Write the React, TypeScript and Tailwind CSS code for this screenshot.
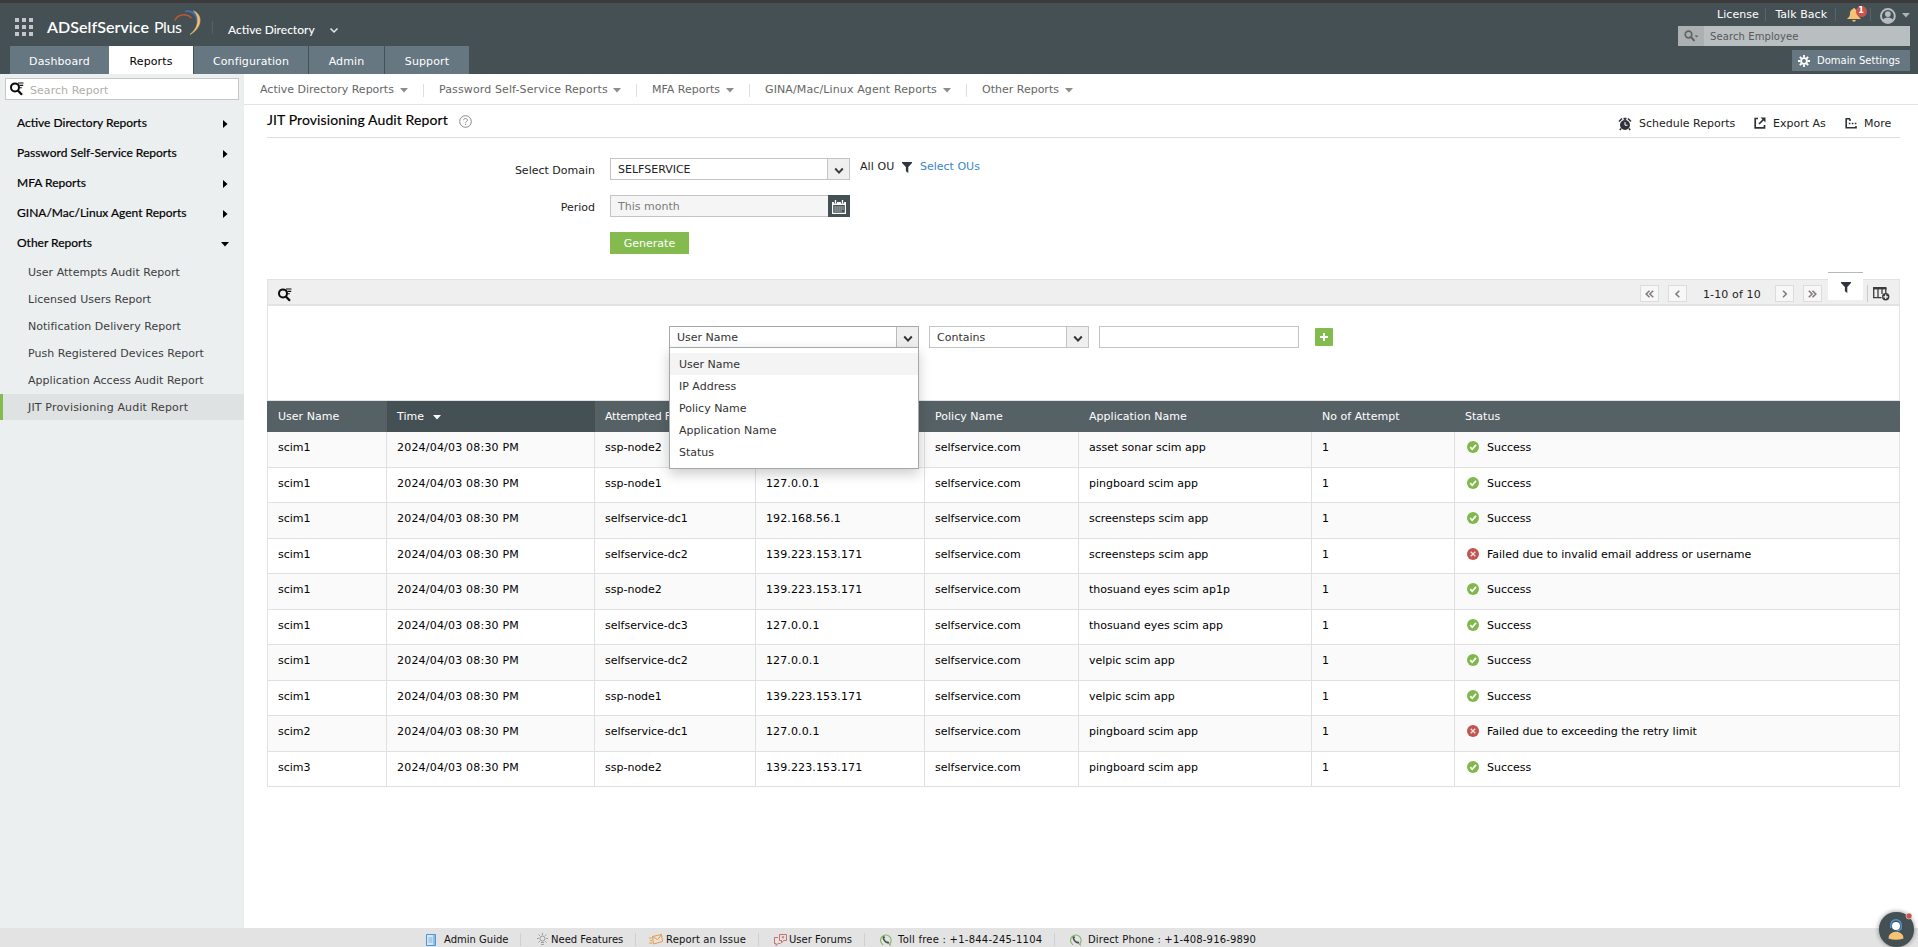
import React from "react";

const verdana = "font-['DejaVu_Sans',sans-serif] text-[11px]";

function Caret({ className = "" }: { className?: string }) {
  return (
    <svg width="8" height="5" viewBox="0 0 8 5" className={className}>
      <path d="M0 0h8L4 4.5z" fill="currentColor" />
    </svg>
  );
}

function SearchListIcon() {
  return (
    <svg width="14" height="14" viewBox="0 0 14 14" fill="none" stroke="#0b0b0b">
      <circle cx="5" cy="5.400" r="4" strokeWidth="2" />
      <path d="M7.600 8.300L12 12.800" strokeWidth="2.300" />
      <path d="M8 1h5.500M9.500 3.400h3.700M9.500 5.700h2.300" strokeWidth="1.100" />
    </svg>
  );
}

function Chevron({ className = "" }: { className?: string }) {
  return (
    <svg width="10" height="8" viewBox="0 0 10 8" className={className}>
      <path d="M1.200 1.500L5 5.600 8.800 1.500" fill="none" stroke="currentColor" strokeWidth="2" />
    </svg>
  );
}

function Funnel() {
  return (
    <svg width="10" height="11" viewBox="0 0 10 11">
      <path d="M0 0h10v1L6.300 5v6L3.900 9.200V5L0 1z" fill="#2f3440" />
    </svg>
  );
}

function StatusIcon({ ok }: { ok: boolean }) {
  return (
    <svg width="12" height="12" viewBox="0 0 12 12" className="mb-[3px]">
      <circle cx="6" cy="6" r="6" fill={ok ? "#80b84c" : "#c0564f"} />
      {ok ? (
        <path d="M3.200 6.200l2 2L9 3.900" fill="none" stroke="#fff" strokeWidth="1.700" />
      ) : (
        <path d="M3.700 3.700l4.600 4.600M8.300 3.700L3.700 8.300" fill="none" stroke="#f7e4e2" strokeWidth="1.300" />
      )}
    </svg>
  );
}

function PhoneIcon() {
  return (
    <svg width="12" height="12" viewBox="0 0 12 12" fill="none">
      <path d="M3 10.800A5.300 5.300 0 1 1 9.500 10.200L11 11.600" stroke="#7db356" strokeWidth="1.100" />
      <path d="M3.500 2.800c-.8 2.600 2.200 6.200 5 6" stroke="#454e53" strokeWidth="1.500" />
      <path d="M3.200 3.700l1.400-.9M7.500 9.200l1.100-1.300" stroke="#454e53" strokeWidth="1.900" />
    </svg>
  );
}

const tabs = [
  { label: "Dashboard", cls: "w-[99px] bg-[#667782] text-white" },
  { label: "Reports", cls: "w-[84px] bg-white text-black mr-px" },
  { label: "Configuration", cls: "w-[114px] bg-[#667782] text-white mr-px" },
  { label: "Admin", cls: "w-[75px] bg-[#667782] text-white mr-px" },
  { label: "Support", cls: "w-[84px] bg-[#667782] text-white" },
];

function Header() {
  return (
    <header className="flex h-[74px] shrink-0 justify-between border-t-[3px] border-[#3d3a3b] bg-[#455055]">
      <div className="flex flex-col">
        <div className="flex h-[43px] pl-[15px]">
          <svg width="18" height="18" viewBox="0 0 18 18" className="mt-[15px]" fill="#c3c7c9">
            {[0, 7, 14].map((y) => [0, 7, 14].map((x) => <rect key={`${x}-${y}`} x={x} y={y} width="4" height="4" />))}
          </svg>
          <div className="relative ml-[14px] mt-[12px] flex h-6 w-[165px] items-center whitespace-nowrap font-['Lato',sans-serif] text-[16px] text-white">
            <span className="font-semibold tracking-[0.05px]">ADSelfService</span>
            <span className="ml-[5px] tracking-[-0.4px]">Plus</span>
            <svg width="30" height="28" viewBox="0 0 30 28" className="absolute left-[127px] top-[-6px]" fill="none">
              <path d="M1 11.500C3 5.500 12 3.500 17.500 9" stroke="#c0562a" strokeWidth="1.500" />
              <path d="M11 2.500C19 .5 24 7 23.500 16" stroke="#3f6fb5" strokeWidth="1.800" />
              <path d="M19.500 2C28 5 29.500 18 16 25.500C24.500 19 26.500 8 19.500 2z" fill="#f6c06c" stroke="#f6c06c" strokeWidth=".6" />
            </svg>
          </div>
          <div className="mt-[18px] h-[13px] w-px bg-[#566067]" />
          <div className="ml-[15px] mt-[17px] flex h-5 items-center whitespace-nowrap font-['Lato',sans-serif] text-[12px] font-medium text-white">
            <span className="w-[101px]">Active Directory</span>
            <svg width="10" height="7" viewBox="0 0 10 7">
              <path d="M1.500 1.500L5 5l3.500-3.500" fill="none" stroke="#e6e8e9" strokeWidth="1.500" />
            </svg>
          </div>
        </div>
        <nav className="flex h-[28px] pl-[10px]">
          {tabs.map((t) => (
            <div key={t.label} className={`flex items-center justify-center pt-[4px] tracking-[0.12px] ${verdana} ${t.cls}`}>
              {t.label}
            </div>
          ))}
        </nav>
      </div>
      <div className="flex w-[240px] flex-col items-end pr-2">
        <div className={`flex h-[23px] w-[193px] items-center whitespace-nowrap text-white tracking-[0.05px] ${verdana}`}>
          <span className="w-[49px] pt-px">License</span>
          <span className="h-[13px] w-px bg-[#5a646a]" />
          <span className="ml-[9px] w-[60px] pt-px">Talk Back</span>
          <span className="h-[13px] w-px bg-[#5a646a]" />
          <span className="relative ml-[11px] flex w-[24px]">
            <svg width="14" height="14" viewBox="0 0 14 14">
              <path d="M7 0a1 1 0 0 1 1 1c2.200.6 3 2.300 3 4.500 0 2.500.8 3.700 2.700 5v.6H.3v-.6C2.200 9.200 3 8 3 5.500 3 3.300 3.800 1.600 6 1a1 1 0 0 1 1-1zM5.200 12h3.600a1.800 1.800 0 0 1-3.600 0z" fill="#f7c274" />
            </svg>
            <span className="absolute left-[9px] top-[-2px] flex h-[11px] w-[11px] items-center justify-center rounded-full bg-[#c9544d] text-[8px] font-bold tracking-normal">1</span>
          </span>
          <span className="h-[13px] w-px bg-[#5a646a]" />
          <svg width="16" height="16" viewBox="0 0 16 16" className="ml-[9px] mt-[2px]">
            <circle cx="8" cy="8" r="7" fill="none" stroke="#b8bcbe" strokeWidth="2" />
            <circle cx="8" cy="6" r="2.900" fill="#b8bcbe" />
            <path d="M2.400 12.400c1.600-3.900 9.600-3.900 11.200 0-2.500 3.300-8.700 3.300-11.200 0z" fill="#b8bcbe" />
          </svg>
          <Caret className="ml-[6px] mt-[2px] text-[#aeb3b5]" />
        </div>
        <div className="flex h-5 w-[232px] items-center bg-[#b9bec0] font-['DejaVu_Sans',sans-serif] text-[10px] text-[#56595b]">
          <span className="flex h-5 w-[26px] items-center bg-[#acb0b1] pl-[6px]">
            <svg width="16" height="12" viewBox="0 0 16 12" fill="none" stroke="#5f6466">
              <circle cx="4.500" cy="4.500" r="3.300" strokeWidth="1.700" />
              <path d="M7 7l3.500 4" strokeWidth="1.900" />
              <path d="M10.500 5.500h4l-2 2z" fill="#5f6466" stroke="none" />
            </svg>
          </span>
          <span className="ml-[6px] mt-[1px] tracking-[0.1px]">Search Employee</span>
        </div>
        <div className="mt-1 flex h-[21px] w-[118px] items-center whitespace-nowrap bg-[#667782] pl-[6px] font-['DejaVu_Sans',sans-serif] text-[10px] text-white">
          <svg width="12" height="12" viewBox="0 0 12 12" fill="none" stroke="#fff">
            <circle cx="6" cy="6" r="2.900" strokeWidth="1.800" />
            <path d="M6 0v2.500M6 9.500V12M0 6h2.500M9.500 6H12M1.800 1.800l1.700 1.700M8.500 8.500l1.700 1.700M1.800 10.200l1.700-1.700M8.500 3.500l1.700-1.700" strokeWidth="1.800" />
          </svg>
          <span className="ml-[7px]">Domain Settings</span>
        </div>
      </div>
    </header>
  );
}

const groups = [
  { label: "Active Directory Reports" },
  { label: "Password Self-Service Reports" },
  { label: "MFA Reports" },
  { label: "GINA/Mac/Linux Agent Reports" },
  { label: "Other Reports", open: true },
];

const subReports = [
  "User Attempts Audit Report",
  "Licensed Users Report",
  "Notification Delivery Report",
  "Push Registered Devices Report",
  "Application Access Audit Report",
  "JIT Provisioning Audit Report",
];

function Sidebar() {
  return (
    <aside className="w-[244px] shrink-0 bg-[#ebeff0] pt-1">
      <div className="ml-[5px] flex h-[22px] w-[234px] items-center border border-[#c6c8c8] bg-white pl-1">
        <SearchListIcon />
        <span className={`ml-[6px] mt-[4px] tracking-[0.05px] text-[#aeb1a8] ${verdana}`}>Search Report</span>
      </div>
      <div className="mt-2 flex flex-col">
        {groups.map((g) => (
          <div key={g.label} className="flex h-[30px] items-center justify-between pl-[17px] pr-[15px] font-['Lato',sans-serif] text-[12px] text-black">
            <span className="whitespace-nowrap [-webkit-text-stroke:0.2px_black] [font-variant-ligatures:common-ligatures]">{g.label}</span>
            {g.open ? (
              <Caret className="mt-[2px] text-black" />
            ) : (
              <svg width="5" height="8" viewBox="0 0 5 8" className="mr-px mt-[2px]">
                <path d="M0 0v8l4.500-4z" fill="#000" />
              </svg>
            )}
          </div>
        ))}
      </div>
      <div className="flex flex-col pt-[1px]">
        {subReports.map((r, i) => (
          <div
            key={r}
            className={`flex items-center border-l-[3px] pl-[25px] pt-[2px] text-[#3d3d3d] ${verdana} ${
              i === 5 ? "h-[26px] border-[#84bb4f] bg-[#dfe2e3] tracking-[0.16px]" : "h-[27px] border-transparent tracking-[0.02px]"
            }`}
          >
            <span className="whitespace-nowrap">{r}</span>
          </div>
        ))}
      </div>
    </aside>
  );
}

const subnav = [
  { label: "Active Directory Reports", text: "w-[140px]", box: "w-[163px]" },
  { label: "Password Self-Service Reports", text: "w-[174px] tracking-[0.12px]", box: "w-[197px]" },
  { label: "MFA Reports", text: "w-[74px]", box: "w-[97px]" },
  { label: "GINA/Mac/Linux Agent Reports", text: "w-[178px] tracking-[0.12px]", box: "w-[201px]" },
  { label: "Other Reports", text: "w-[83px]", box: "w-[106px]" },
];

function SubNav() {
  return (
    <nav className={`flex h-[31px] shrink-0 items-center border-b border-[#e3e3e3] pl-4 pt-[2px] text-[#666] ${verdana}`}>
      {subnav.map((s, i) => (
        <React.Fragment key={s.label}>
          {i > 0 && <span className="mr-[15px] h-[13px] w-px bg-[#dedede]" />}
          <div className={`flex items-center whitespace-nowrap ${s.box}`}>
            <span className={`pt-px ${s.text}`}>{s.label}</span>
            <Caret className="mt-[1px] text-[#8c8c8c]" />
          </div>
        </React.Fragment>
      ))}
    </nav>
  );
}

function TitleBar() {
  return (
    <div className="ml-[23px] mr-[18px] flex h-[33px] shrink-0 items-center justify-between border-b border-[#dedede]">
      <div className="flex items-center">
        <h1 className="w-[192px] whitespace-nowrap pb-[3px] font-['Lato',sans-serif] text-[14px] tracking-[0.1px] text-black [-webkit-text-stroke:0.15px_black]">JIT Provisioning Audit Report</h1>
        <svg width="13" height="13" viewBox="0 0 13 13" fill="none" stroke="#888">
          <circle cx="6.500" cy="6.500" r="5.800" />
          <path d="M4.700 5.200c0-2.400 3.700-2.300 3.700 0 0 1.300-1.800 1.400-1.800 2.600M6.600 8.800v1.200" />
        </svg>
      </div>
      <div className={`flex items-center whitespace-nowrap pt-[5px] text-[#222] ${verdana}`}>
        <svg width="14" height="14" viewBox="0 0 14 14">
          <circle cx="7" cy="8" r="5" fill="#2f3238" />
          <path d="M1 4.500L4 1.500M13 4.500L10 1.500M3 11.500L1.800 13M11 11.500l1.200 1.500M7 3V1.500M5.500 1.600h3" stroke="#2f3238" strokeWidth="1.600" />
          <path d="M7 5v3.200h2.500" stroke="#fff" strokeWidth="1" fill="none" />
        </svg>
        <span className="ml-[7px] w-[115px] pt-px">Schedule Reports</span>
        <svg width="12" height="12" viewBox="0 0 12 12" fill="none" stroke="#2f3238" strokeWidth="1.700" className="mb-[2px]">
          <path d="M4 1.500H1.200v9.300h9.300V8" />
          <path d="M5 7l5-5" />
          <path d="M6.500 .5H11.500V5.500z" fill="#2f3238" stroke="none" />
        </svg>
        <span className="ml-[7px] w-[72px] pt-px">Export As</span>
        <svg width="12" height="12" viewBox="0 0 12 12" fill="none" stroke="#2f3238" strokeWidth="1.600" className="mb-[2px]">
          <path d="M5 1.800H1.200v8.900h9.800V9M5 1.800V4" />
          <path d="M3.800 6.500h1.600M6.800 6.500h1.600M9.800 6.500h1.600" />
        </svg>
        <span className="ml-[7px] w-[36px] pt-px">More</span>
      </div>
    </div>
  );
}

function CalendarIcon() {
  return (
    <svg width="14" height="14" viewBox="0 0 14 14" fill="none">
      <path d="M.6 2.600h12.800v10.800H.6z" stroke="#fff" strokeWidth="1.200" />
      <path d="M0 2h14v3H0z" fill="#fff" />
      <path d="M3.500 0v3.500M10.500 0v3.500" stroke="#455055" strokeWidth="3.200" />
      <path d="M3.500 0v3.500M10.500 0v3.500" stroke="#fff" strokeWidth="1.300" />
      <path d="M2.500 7h9M2.500 9h9M2.500 11h7" stroke="#fff" strokeWidth="1" strokeDasharray="1.200 .8" />
    </svg>
  );
}

function ReportForm() {
  return (
    <div className={`flex h-[141px] shrink-0 flex-col pt-5 text-[#222] ${verdana}`}>
      <div className="flex h-[22px]">
        <span className="flex w-[351px] items-center justify-end whitespace-nowrap pt-[4px]">Select Domain</span>
        <div className="ml-[15px] flex w-[240px] items-center justify-between border border-[#c4c4c4]">
          <span className="pl-[7px] pt-[2px]">SELFSERVICE</span>
          <span className="flex h-full w-[22px] items-center justify-center border-l border-[#c4c4c4] bg-[#efefef] pt-[3px] text-[#3b3b3b]">
            <Chevron />
          </span>
        </div>
        <div className="ml-[10px] flex items-center whitespace-nowrap pb-[4px]">
          <span className="w-[42px] tracking-[0.1px]">All OU</span>
          <Funnel />
          <span className="ml-[8px] text-[#3a86c4]">Select OUs</span>
        </div>
      </div>
      <div className="mt-[15px] flex h-[22px]">
        <span className="flex w-[351px] items-center justify-end pt-[4px]">Period</span>
        <div className="ml-[15px] flex w-[240px]">
          <div className="flex flex-1 items-center border border-r-0 border-[#c4c4c4] bg-[#f5f5f5] pl-[7px] pt-[2px] text-[#7b7b7b]">This month</div>
          <div className="flex w-[22px] items-center justify-center bg-[#455055] pt-[1px]">
            <CalendarIcon />
          </div>
        </div>
      </div>
      <button className="ml-[366px] mt-[15px] h-[22px] w-[79px] bg-[#84bb4f] pt-[2px] text-white">Generate</button>
    </div>
  );
}

function PageButton({ d }: { d: string }) {
  return (
    <span className="flex h-[17px] w-[19px] items-center justify-center border border-[#dcdcdc] bg-[#f7f7f7]">
      <svg width="9" height="8" viewBox="0 0 9 8">
        <path d={d} fill="none" stroke="#857b7e" strokeWidth="1.600" />
      </svg>
    </span>
  );
}

function Toolbar() {
  return (
    <div className="flex h-[27px] justify-between border-b-2 border-t border-[#e2e2e2] bg-[#efefef]">
      <div className="ml-[10px] mt-[8px]">
        <SearchListIcon />
      </div>
      <div className="flex pr-[9px]">
        <div className={`mt-[5px] flex h-[17px] items-center whitespace-nowrap tracking-[0.12px] text-[#222] ${verdana}`}>
          <PageButton d="M4.500 .8L1.200 4l3.300 3.200M8.200 .8L4.900 4l3.300 3.200" />
          <span className="ml-[9px]"><PageButton d="M6.300 .8L3 4l3.300 3.200" /></span>
          <span className="ml-[16px] w-[72px] pt-[3px]">1-10 of 10</span>
          <PageButton d="M3 .8L6.300 4 3 7.200" />
          <span className="ml-[9px]"><PageButton d="M.8 .8L4.100 4 .8 7.200M4.500 .8L7.800 4 4.500 7.200" /></span>
        </div>
        <div className="ml-[6px] mt-[-8px] flex h-[28px] w-[35px] justify-center border-t border-[#b5b9ba] bg-white pt-[9px]">
          <Funnel />
        </div>
        <span className="ml-[4px] mt-[5px] h-[17px] w-px bg-[#c9c9c9]" />
        <svg width="17" height="14" viewBox="0 0 17 14" className="ml-[5px] mt-[7px]" fill="none" stroke="#3c3c3c">
          <path d="M0 1.200h13.500" strokeWidth="2.400" />
          <path d="M.7 1v10M5 1v10M9 1v6M12.800 1v5M0 10.700h8.500" strokeWidth="1.300" />
          <circle cx="12.700" cy="9.800" r="3.700" fill="#3c3c3c" stroke="none" />
          <path d="M10.500 9.800h4.400M12.700 7.600V12" stroke="#fff" strokeWidth="1.200" />
        </svg>
      </div>
    </div>
  );
}

const options = ["User Name", "IP Address", "Policy Name", "Application Name", "Status"];

function FilterRow() {
  return (
    <div className={`flex h-[95px] border-b border-[#e2e2e2] pl-[401px] pt-[20px] text-[#333] ${verdana}`}>
      <div className="relative flex h-[22px] w-[250px] items-center justify-between border border-[#a3a8a8]">
        <span className="pl-[7px] pt-[2px]">User Name</span>
        <span className="flex h-full w-[22px] items-center justify-center border-l border-[#b9bcbc] bg-[#efefef] pt-[3px]">
          <Chevron />
        </span>
        <ul className="absolute left-[-1px] top-[20px] z-10 h-[122px] w-[250px] border border-[#a3a8a8] bg-white pt-[5px] shadow-[0_5px_12px_rgba(0,0,0,0.2)]">
          {options.map((o, i) => (
            <li key={o} className={`flex h-[22px] items-center pl-[9px] pt-[2px] ${i === 0 ? "bg-[#f4f4f4]" : ""}`}>
              {o}
            </li>
          ))}
        </ul>
      </div>
      <div className="ml-[10px] flex h-[22px] w-[160px] items-center justify-between border border-[#c4c4c4]">
        <span className="pl-[7px] pt-[2px]">Contains</span>
        <span className="flex h-full w-[22px] items-center justify-center border-l border-[#c4c4c4] bg-[#efefef] pt-[3px]">
          <Chevron />
        </span>
      </div>
      <div className="ml-[10px] h-[22px] w-[200px] border border-[#c4c4c4]" />
      <div className="ml-[16px] mt-[2px] flex h-[18px] w-[18px] items-center justify-center rounded-[1px] bg-[#84bb4f]">
        <svg width="8" height="8" viewBox="0 0 8 8">
          <path d="M4 0v8M0 4h8" stroke="#fff" strokeWidth="2" />
        </svg>
      </div>
    </div>
  );
}

const rows = [
  ["scim1", "ssp-node2", "127.0.0.1", "asset sonar scim app", "Success"],
  ["scim1", "ssp-node1", "127.0.0.1", "pingboard scim app", "Success"],
  ["scim1", "selfservice-dc1", "192.168.56.1", "screensteps scim app", "Success"],
  ["scim1", "selfservice-dc2", "139.223.153.171", "screensteps scim app", "Failed due to invalid email address or username"],
  ["scim1", "ssp-node2", "139.223.153.171", "thosuand eyes scim ap1p", "Success"],
  ["scim1", "selfservice-dc3", "127.0.0.1", "thosuand eyes scim app", "Success"],
  ["scim1", "selfservice-dc2", "127.0.0.1", "velpic scim app", "Success"],
  ["scim1", "ssp-node1", "139.223.153.171", "velpic scim app", "Success"],
  ["scim2", "selfservice-dc1", "127.0.0.1", "pingboard scim app", "Failed due to exceeding the retry limit"],
  ["scim3", "ssp-node2", "139.223.153.171", "pingboard scim app", "Success"],
];

const headers = ["User Name", "Time", "Attempted From", "IP Address", "Policy Name", "Application Name", "No of Attempt", "Status"];
const grid = "grid grid-cols-[119px_208px_161px_169px_154px_233px_143px_1fr]";
const cellTracking = ["", "tracking-[0.2px]", "", "tracking-[0.12px]", "", "", ""];

function ReportTable() {
  return (
    <div className={`${verdana} whitespace-nowrap`}>
      <div className={`-mx-px h-[31px] bg-[#566166] pl-px text-white ${grid}`}>
        {headers.map((h, i) => (
          <div key={h} className={`flex items-center pl-[10px] pt-px ${i === 1 ? "bg-[#455055]" : ""} ${i === 2 ? "tracking-[-0.22px]" : "tracking-[0.02px]"}`}>
            {h}
            {i === 1 && <Caret className="ml-[9px]" />}
          </div>
        ))}
      </div>
      {rows.map(([user, from, ip, app, status], i) => (
        <div
          key={i}
          className={`border-b border-[#e0e0e0] text-black ${grid} ${i % 2 === 0 ? "h-[36px] bg-[#fafafa]" : "h-[35px]"}`}
        >
          {[user, "2024/04/03 08:30 PM", from, ip, "selfservice.com", app, "1"].map((c, j) => (
            <div key={j} className={`flex items-center border-r border-[#e0e0e0] pb-[2px] pl-[10px] ${cellTracking[j]}`}>
              {c}
            </div>
          ))}
          <div className="flex items-center pb-[2px] pl-[12px]">
            <StatusIcon ok={status === "Success"} />
            <span className="ml-[8px]">{status}</span>
          </div>
        </div>
      ))}
    </div>
  );
}

function Sep({ className }: { className: string }) {
  return <span className={`h-[13px] w-px bg-[#cdd1d1] ${className}`} />;
}

function Footer() {
  return (
    <footer className="relative flex h-[19px] shrink-0 items-center whitespace-nowrap bg-[#e3e3e3] pl-[426px] pt-[4px] font-['DejaVu_Sans',sans-serif] text-[10px] text-[#111]">
      <svg width="10" height="12" viewBox="0 0 10 12" fill="none" stroke="#4b97d2">
        <path d="M.5 .5h9v11h-9z" fill="#d5e6f3" />
        <path d="M8 .5v11" />
        <path d="M2.500 4h4M2.500 6h4M2.500 8h4" stroke="#7fb4dd" />
      </svg>
      <span className="ml-[8px] w-[76px]">Admin Guide</span>
      <Sep className="mr-[16px]" />
      <svg width="11" height="13" viewBox="0 0 11 13" fill="none" stroke="#999">
        <circle cx="5.500" cy="5.500" r="2.500" />
        <path d="M4 9.500h3M4.300 11.500h2.400M5.500 0v1.800M0 5.500h1.800M9.200 5.500H11M1.500 1.500l1.300 1.300M9.500 1.500L8.200 2.800M1.500 9.500l1.300-1.300M9.500 9.500L8.200 8.200" />
      </svg>
      <span className="ml-[3px] w-[84px]">Need Features</span>
      <Sep className="mr-[13px]" />
      <svg width="14" height="11" viewBox="0 0 14 11" fill="none" stroke="#e79c45">
        <path d="M3.500 2.500l9-2 1 7-9 2.500zM3.500 2.500l5.200 3.200 3.800-5.200M0 4h2.500M1 6.500h2M0 9h3.500" />
      </svg>
      <span className="ml-[3px] w-[92px] tracking-[0.14px]">Report an Issue</span>
      <Sep className="mr-[15px]" />
      <svg width="13" height="12" viewBox="0 0 13 12" fill="none" stroke="#c9706c">
        <path d="M5.500 .5h7v6H9.500L7.500 9V6.500h-2zM4 3.500H.5v6H2v2l2.200-2h2.300" />
        <path d="M9 2v2.500M7.800 3.200h2.400" />
      </svg>
      <span className="ml-[2px] w-[75px]">User Forums</span>
      <Sep className="mr-[15px]" />
      <PhoneIcon />
      <span className="ml-[6px] w-[156px] tracking-[0.24px]">Toll free : +1-844-245-1104</span>
      <Sep className="mr-[15px]" />
      <PhoneIcon />
      <span className="ml-[6px] tracking-[0.17px]">Direct Phone : +1-408-916-9890</span>
      <div className="absolute bottom-0 right-[4px] h-[35px] w-[35px] rounded-[17px] bg-[#455055] shadow-[0_0_5px_rgba(0,0,0,0.45)]">
        <svg width="35" height="35" viewBox="0 0 35 35">
          <path d="M9.500 26.500c0-9 15-9 15 0q-7.500 2.500-15 0z" fill="#f7c274" />
          <circle cx="17" cy="14" r="4" fill="#fff" />
          <path d="M11.800 16v-3a5.200 5.200 0 0 1 10.400 0v3c0 1.500-1.500 2.500-4.500 2.800" fill="none" stroke="#4b9be0" strokeWidth="1.400" />
          <circle cx="30" cy="4" r="3" fill="#c9544d" stroke="#e5e5e5" strokeWidth=".6" />
        </svg>
      </div>
    </footer>
  );
}

export default function App() {
  return (
    <div className="flex h-[947px] w-[1918px] flex-col overflow-hidden bg-white">
      <Header />
      <div className="flex min-h-0 flex-1">
        <Sidebar />
        <main className="flex min-w-0 flex-1 flex-col bg-white">
          <SubNav />
          <TitleBar />
          <ReportForm />
          <section className="ml-[23px] mr-[18px] border-x border-[#e2e2e2]">
            <Toolbar />
            <FilterRow />
            <ReportTable />
          </section>
        </main>
      </div>
      <Footer />
    </div>
  );
}
